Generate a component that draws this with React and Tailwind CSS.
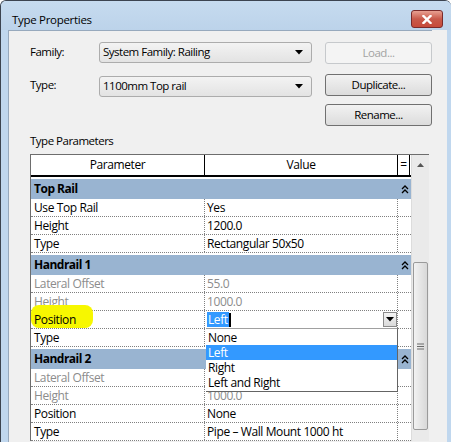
import React from 'react';

const font = "font-['Open_Sans',sans-serif]";
const tableText = 'text-[12px] tracking-[-0.4px]';
const topText = 'text-[11.5px] tracking-[-0.5px]';

const Chevrons = () => (
  <svg width="8" height="9" viewBox="0 0 8 9" className="block">
    <path d="M1 4 L4 1 L7 4" fill="none" stroke="#000" strokeWidth="1.3" />
    <path d="M1 8 L4 5 L7 8" fill="none" stroke="#000" strokeWidth="1.3" />
  </svg>
);

const DownArrow = ({ className = '' }) => (
  <svg width="8" height="5" viewBox="0 0 8 5" className={className}>
    <path d="M0 0 H8 L4 4.5 Z" fill="#000" />
  </svg>
);

const Combo = ({ value }) => (
  <div className={`w-[213px] h-[21px] border border-[#acacac] rounded-[3px] bg-gradient-to-b from-[#f3f3f3] to-[#e3e3e3] flex items-center pl-[3px] pr-[8px] ${topText} text-black`}>
    <span className="flex-1">{value}</span>
    <DownArrow />
  </div>
);

const Button = ({ label, disabled }) => (
  <div
    className={
      disabled
        ? `w-[107px] h-[22px] border border-[#c6c9cc] rounded-[3px] bg-[#f4f4f4] flex items-center justify-center ${topText} text-[#a3a3a3]`
        : `w-[107px] h-[22px] border border-[#707070] rounded-[3px] bg-gradient-to-b from-[#f2f2f2] to-[#dcdcdc] flex items-center justify-center ${topText} text-black`
    }
  >
    {label}
  </div>
);

const GroupRow = ({ title }) => (
  <div className="mt-[2px] h-[20px] bg-[#99b4d1] flex items-center">
    <span className="flex-1 pl-[3px] font-bold text-[12px] tracking-[-0.5px]">{title}</span>
    <span className="w-[12px] flex justify-center"><Chevrons /></span>
  </div>
);

const Row = ({ name, value, dim, children, nameNode }) => (
  <div className={`h-[18px] flex border-b border-dotted border-[#808080] ${tableText} ` + (dim ? 'text-[#8c8c8c]' : 'text-black')}>
    <div className="w-[174px] pl-[3px] flex items-center border-r border-dotted border-[#808080]">{nameNode || name}</div>
    <div className="w-[193px] pl-[2px] flex items-center border-r border-dotted border-[#808080]">{children || value}</div>
    <div className="w-[12px]" />
  </div>
);

export default function App() {
  return (
    <div className={`${font} w-[451px] h-[442px] overflow-hidden bg-[#c0d7ee] border-l border-t border-[#3c4450] rounded-tl-[6px] rounded-tr-[6px] flex flex-col text-black`}>
      {/* title bar */}
      <div className="h-[29px] shrink-0 flex items-start bg-gradient-to-b from-[#c6dbef] to-[#bcd3ea]">
        <span className="mt-[10px] ml-[11px] text-[11.5px] tracking-[-0.3px]">Type Properties</span>
        <div className="ml-auto mr-[8px] mt-[9px] w-[32px] h-[18px] rounded-[3px] border border-[#7a2a2a] bg-gradient-to-b from-[#e8a092] via-[#c8594a] to-[#c74a3a] flex items-center justify-center">
          <svg width="10" height="9" viewBox="0 0 10 9">
            <path d="M1.5 1 L8.5 8 M8.5 1 L1.5 8" stroke="#fff" strokeWidth="2.4" strokeLinecap="square" />
          </svg>
        </div>
      </div>

      <div className="flex-1 flex">
        <div className="w-[7px] shrink-0" />
        <div className="flex-1 bg-[#f0f0f0] border-l border-t border-[#97a9bd] flex flex-col">
          {/* selectors */}
          <div className="pl-[21px] pt-[10px] flex flex-col">
            <div className="h-[22px] flex items-center">
              <span className={`w-[69px] ${topText}`}>Family:</span>
              <Combo value="System Family: Railing" />
              <div className="ml-[13px] mt-[2px]"><Button label="Load..." disabled /></div>
            </div>
            <div className="mt-[11px] h-[22px] flex items-center">
              <span className={`w-[69px] ${topText}`}>Type:</span>
              <div className="mt-[2px]"><Combo value="1100mm Top rail" /></div>
              <div className="ml-[13px] -mt-[1px]"><Button label="Duplicate..." /></div>
            </div>
            <div className="mt-[8px] h-[22px] flex">
              <div className="w-[295px]" />
              <Button label="Rename..." />
            </div>
          </div>

          <div className={`pl-[21px] mt-[7px] leading-[16px] ${topText}`}>Type Parameters</div>

          {/* grid + scrollbar */}
          <div className="ml-[21px] mt-[5px] w-[399px] flex border-t border-[#6d6d6d] border-l">
            <div className="relative w-[380px] bg-white">
              <div className={`h-[22px] flex border-b-2 border-black ${tableText}`}>
                <div className="w-[174px] flex items-center justify-center border-r border-black">Parameter</div>
                <div className="w-[193px] flex items-center justify-center border-r border-black">Value</div>
                <div className="w-[12px] flex items-center justify-center border-r border-black">=</div>
              </div>

              <GroupRow title="Top Rail" />
              <Row name="Use Top Rail" value="Yes" />
              <Row name="Height" value="1200.0" />
              <Row name="Type" value="Rectangular 50x50" />

              <GroupRow title="Handrail 1" />
              <Row name="Lateral Offset" value="55.0" dim />
              <Row name="Height" value="1000.0" dim />
              <Row
                nameNode={
                  <span className="relative">
                    <span className="absolute -left-[3px] -top-[6px] w-[62px] h-[23px] rounded-[8px] bg-[#f7f700]" />
                    <span className="relative">Position</span>
                  </span>
                }
              >
                <div className="flex-1 flex items-center h-full">
                  <span className="bg-[#3399ff] text-white px-[1px] leading-[15px]">Left</span>
                  <span className="w-[2px] h-[14px] bg-black" />
                  <div className="ml-auto w-[14px] h-[15px] border border-[#8a8a8a] bg-gradient-to-b from-[#f4f4f4] to-[#dadada] flex items-center justify-center">
                    <DownArrow />
                  </div>
                </div>
              </Row>
              <Row name="Type" value="" />

              <GroupRow title="Handrail 2" />
              <Row name="Lateral Offset" value="" dim />
              <Row name="Height" value="1000.0" dim />
              <Row name="Position" value="None" />
              <Row name="Type" value="Pipe – Wall Mount 1000 ht" />

              {/* open dropdown list */}
              <div className={`absolute left-[175px] top-[173px] w-[192px] h-[64px] bg-white border-t border-[#a0a0a0] border-r border-b border-r-[#646464] border-b-[#646464] ${tableText}`}>
                <div className="h-[15px] leading-[15px] pl-[2px] mt-[1px]">None</div>
                <div className="h-[15px] leading-[15px] pl-[2px] bg-[#3399ff] text-white">Left</div>
                <div className="h-[15px] leading-[15px] pl-[2px]">Right</div>
                <div className="h-[15px] leading-[15px] pl-[2px]">Left and Right</div>
              </div>
            </div>

            {/* scrollbar */}
            <div className="w-[18px] bg-[#eaeaea] border-l border-[#dcdcdc] flex flex-col items-center">
              <svg width="7" height="4" viewBox="0 0 7 4" className="mt-[8px]">
                <path d="M0 4 L3.5 0 L7 4 Z" fill="#555" />
              </svg>
              <div className="mt-[95px] w-[15px] h-[168px] rounded-[2px] border border-[#9a9a9a] bg-gradient-to-r from-[#f2f2f2] to-[#d8d8d8] flex items-center justify-center">
                <svg width="7" height="7" viewBox="0 0 7 7">
                  <path d="M0 1 H7 M0 3.5 H7 M0 6 H7" stroke="#6a6a6a" strokeWidth="1" />
                </svg>
              </div>
            </div>
          </div>
        </div>
        <div className="w-[15px] shrink-0 bg-[#f0f0f0]" />
        <div className="w-[7px] shrink-0" />
      </div>
    </div>
  );
}
